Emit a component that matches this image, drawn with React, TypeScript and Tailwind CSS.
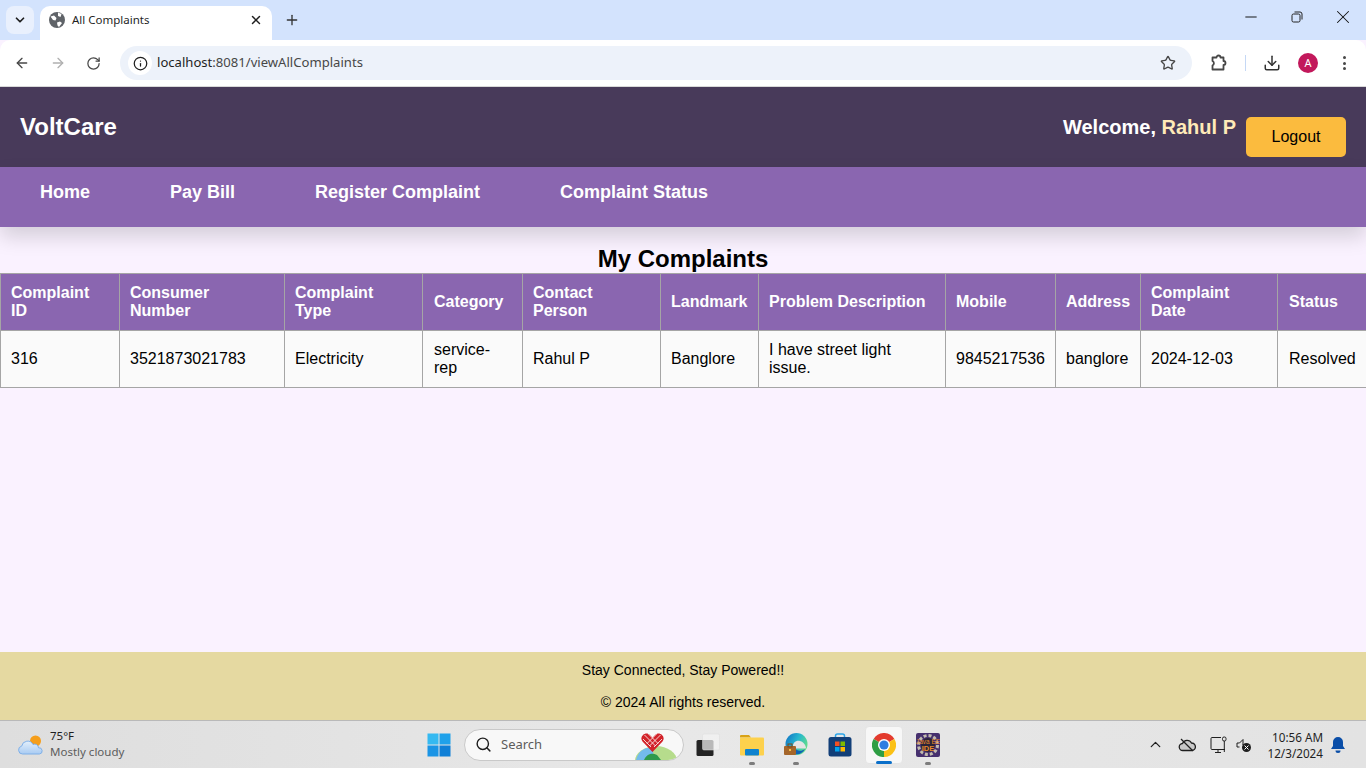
import { ArrowLeft, ArrowRight, ChevronDown, ChevronUp, Download, Info, Minus, Plus, RotateCw, Search, Star, X } from 'lucide-react';

const columns = [
  { title: ['Complaint', 'ID'], value: ['316'], width: 'w-[119px]', pad: 'px-[10px]' },
  { title: ['Consumer', 'Number'], value: ['3521873021783'], width: 'w-[165px]', pad: 'px-[10px]' },
  { title: ['Complaint', 'Type'], value: ['Electricity'], width: 'w-[138px]', pad: 'px-[10px]' },
  { title: ['Category'], value: ['service-', 'rep'], width: 'w-[100px]', pad: 'pl-[11px] pr-[9px]' },
  { title: ['Contact', 'Person'], value: ['Rahul P'], width: 'w-[138px]', pad: 'px-[10px]' },
  { title: ['Landmark'], value: ['Banglore'], width: 'w-[98px]', pad: 'px-[10px]' },
  { title: ['Problem Description'], value: ['I have street light', 'issue.'], width: 'w-[187px]', pad: 'px-[10px]' },
  { title: ['Mobile'], value: ['9845217536'], width: 'w-[110px]', pad: 'px-[10px]' },
  { title: ['Address'], value: ['banglore'], width: 'w-[85px]', pad: 'px-[10px]' },
  { title: ['Complaint', 'Date'], value: ['2024-12-03'], width: 'w-[137px]', pad: 'px-[10px]' },
  { title: ['Status'], value: ['Resolved'], width: 'w-[89px]', pad: 'pl-[11px] pr-[9px]' },
];

function GlobeIcon() {
  return (
    <svg width="16" height="16" viewBox="0 0 16 16">
      <circle cx="8" cy="8" r="8" fill="#5f6368" />
      <path d="M1.500 4.500 5 3.500 7.500 6 6.500 8.500 4 8ZM8 10.500l3-1 2 1.500-3 4-1.500-1.500ZM9 .5l3.500 1.500-1 3-2.500-1Z" fill="#fff" />
    </svg>
  );
}

function RestoreIcon() {
  return (
    <svg width="12" height="12" viewBox="0 0 12 12" fill="none" stroke="#222" strokeWidth="1">
      <rect x="1" y="3" width="8" height="8" rx="1.5" />
      <path d="M3.500 1h5.500a2 2 0 0 1 2 2v5.500" />
    </svg>
  );
}

function ExtensionIcon() {
  return (
    <svg width="18" height="18" viewBox="0 0 18 18" fill="none" stroke="#474747" strokeWidth="1.800" strokeLinejoin="round">
      <path d="M2.500 3.500H6.500a2 2 0 0 1 4 0H13.500V7a2 2 0 0 1 0 4V15.500H2.500V11.500a2.500 2.500 0 0 0 0-4.500Z" />
    </svg>
  );
}

function WeatherIcon() {
  return (
    <svg width="28" height="24" viewBox="0 0 28 24">
      <defs>
        <linearGradient id="cloudFill" x1="0" y1="0" x2="0" y2="1">
          <stop offset="0" stopColor="#e3effb" />
          <stop offset="1" stopColor="#a9cbf2" />
        </linearGradient>
      </defs>
      <circle cx="18.500" cy="8" r="5.500" fill="#f59e1b" />
      <path d="M5.500 21a4 4 0 0 1-.8-7.900A6 6 0 0 1 16 11.500a3.800 3.800 0 0 1 5.500 3.300A3.100 3.100 0 0 1 22.500 21Z" fill="url(#cloudFill)" stroke="#7fb0e8" strokeWidth="1" />
    </svg>
  );
}

function WindowsIcon() {
  return (
    <svg width="24" height="24" viewBox="0 0 24 24">
      <rect x="0.500" y="0.500" width="11" height="11" fill="#35b9f1" />
      <rect x="12.500" y="0.500" width="11" height="11" fill="#1fa1ea" />
      <rect x="0.500" y="12.500" width="11" height="11" fill="#1a94e5" />
      <rect x="12.500" y="12.500" width="11" height="11" fill="#0f7fd6" />
    </svg>
  );
}

function TaskViewIcon() {
  return (
    <svg width="24" height="24" viewBox="0 0 24 24">
      <rect x="0.500" y="7" width="17" height="16" rx="1.500" fill="#242424" />
      <rect x="6.500" y="1" width="17" height="16" rx="1.500" fill="#f2f2f2" fillOpacity="0.720" stroke="#dcdcdc" strokeWidth="0.500" />
    </svg>
  );
}

function FolderIcon() {
  return (
    <svg width="24" height="24" viewBox="0 0 24 24">
      <path d="M0 3a1 1 0 0 1 1-1h8l2 2.500H0Z" fill="#d8a216" />
      <rect x="0" y="4.500" width="24" height="18" rx="1" fill="#fdd14d" />
      <rect x="5" y="16" width="14" height="6.500" rx="1" fill="#0f83cf" />
    </svg>
  );
}

function EdgeIcon() {
  return (
    <svg width="24" height="24" viewBox="0 0 24 24">
      <defs>
        <linearGradient id="edgeFill" x1="0" y1="0" x2="1" y2="0.500">
          <stop offset="0" stopColor="#0f6cc4" />
          <stop offset="0.550" stopColor="#26b7cf" />
          <stop offset="1" stopColor="#5fdc8c" />
        </linearGradient>
      </defs>
      <circle cx="12.500" cy="11" r="11" fill="url(#edgeFill)" />
      <path d="M9 14c-.5-4 3-7 7-6 3 .8 5 3 6 6.500l-.5 1H12c-2 0-3-.5-3-1.500Z" fill="#e4e4e4" />
      <path d="M10 14c2 4 7 5 11 2-2 4-6 6-10 5Z" fill="#0f62b5" />
      <rect x="0" y="13" width="12" height="9" rx="1" fill="#a5662a" />
      <rect x="4" y="11" width="4" height="3" fill="none" stroke="#7a4a1c" strokeWidth="1" />
      <rect x="5" y="16" width="2" height="2" fill="#f5c349" />
    </svg>
  );
}

function StoreIcon() {
  return (
    <svg width="24" height="24" viewBox="0 0 24 24">
      <path d="M7.500 5V3a2 2 0 0 1 2-2h5a2 2 0 0 1 2 2v2" fill="none" stroke="#2ba5e8" strokeWidth="1.500" />
      <rect x="0.500" y="4" width="23" height="19.500" rx="2.500" fill="#123f78" />
      <rect x="7" y="8.500" width="4.500" height="4.500" fill="#f25022" />
      <rect x="12.500" y="8.500" width="4.500" height="4.500" fill="#7fba00" />
      <rect x="7" y="14" width="4.500" height="4.500" fill="#00a4ef" />
      <rect x="12.500" y="14" width="4.500" height="4.500" fill="#ffb900" />
    </svg>
  );
}

function ChromeIcon() {
  return (
    <svg width="24" height="24" viewBox="0 0 24 24">
      <path d="M12 12 1.600 6A12 12 0 0 1 22.400 6Z" fill="#e33b2e" />
      <path d="M12 12 13 24A12 12 0 0 1 1.600 6Z" fill="#2f9e44" />
      <path d="M12 12 22.400 6A12 12 0 0 1 12 24Z" fill="#fbc116" />
      <circle cx="12" cy="12" r="6" fill="#fff" />
      <circle cx="12" cy="12" r="4.600" fill="#2f7de1" />
    </svg>
  );
}

function JavaIdeIcon() {
  return (
    <svg width="24" height="24" viewBox="0 0 24 24">
      <rect width="24" height="24" rx="2" fill="#46306e" />
      <circle cx="12" cy="12" r="9.500" fill="none" stroke="#c2bcae" strokeWidth="3" strokeDasharray="3 2" />
      <circle cx="12" cy="12" r="7" fill="#2b2438" />
      <text x="12" y="10.500" textAnchor="middle" fontSize="6.500" fill="#e8892b" fontFamily="Liberation Sans, sans-serif">Java EE</text>
      <text x="12" y="18" textAnchor="middle" fontSize="7.500" fontWeight="700" fill="#e8892b" fontFamily="Liberation Sans, sans-serif">IDE</text>
    </svg>
  );
}

function BingHeartIcon() {
  return (
    <svg width="46" height="28" viewBox="0 0 46 28">
      <ellipse cx="23" cy="29" rx="21" ry="15" fill="#b6dc8c" />
      <path d="M3 28C5 20 11 15 19 16l3 12Z" fill="#73bbec" />
      <path d="M11 28c2-5 7-8 13-5l4 5Z" fill="#2e9a4c" />
      <path d="M19.500 20 9.500 9.500a5 5 0 0 1 .5-6.500c2-2 5-2 7 0l2.500 2.500L22 3c2-2 5-2 7 0a5 5 0 0 1 .5 6.500Z" fill="#d2232a" />
      <path d="M11.500 3l11 11M15.500 2l9.500 9.500M27.500 3l-11 11M23.500 2 14 11.500M10 7l8 8M29 7l-8 8" stroke="#fff" strokeWidth="0.800" />
    </svg>
  );
}

function CloudOffIcon() {
  return (
    <svg width="18" height="18" viewBox="0 0 18 18" fill="none" stroke="#1f1f1f" strokeWidth="1.300">
      <path d="M5 14.500a3.500 3.500 0 0 1-.5-7A5 5 0 0 1 13.500 7a3.700 3.700 0 0 1 .3 7.500Z" fill="#c9c9c9" />
      <path d="M3 3l12 12" />
    </svg>
  );
}

function MonitorPlugIcon() {
  return (
    <svg width="18" height="18" viewBox="0 0 18 18" fill="none" stroke="#1f1f1f" strokeWidth="1">
      <path d="M11 1.500H2a1 1 0 0 0-1 1v10a1 1 0 0 0 1 1h13" />
      <path d="M5 16.500h6M8 14v2.500" />
      <rect x="12.500" y="1" width="3.500" height="4" rx="1.500" />
      <path d="M14.300 5v11" />
    </svg>
  );
}

function MutedSpeakerIcon() {
  return (
    <svg width="16" height="16" viewBox="0 0 16 16">
      <path d="M1 6h2.500L7 2.500V8" fill="none" stroke="#1f1f1f" strokeWidth="1" />
      <path d="M1 6v4h2.500" fill="none" stroke="#1f1f1f" strokeWidth="1" />
      <circle cx="10.500" cy="10.500" r="4.500" fill="#1f1f1f" />
      <path d="M8.500 8.500l4 4M12.500 8.500l-4 4" stroke="#fff" strokeWidth="1" />
    </svg>
  );
}

function BellIcon() {
  return (
    <svg width="16" height="18" viewBox="0 0 16 18">
      <path d="M8 1a5 5 0 0 1 5 5v4l2 3H1l2-3V6a5 5 0 0 1 5-5Z" fill="#0a4ea8" />
      <path d="M5.500 14.500h5a2.500 2.500 0 0 1-5 0Z" fill="#0a4ea8" />
    </svg>
  );
}

function TaskbarApp({ children, dot, active }: { children: React.ReactNode; dot?: boolean; active?: boolean }) {
  return (
    <div className={`relative w-[38px] h-[38px] flex items-center justify-center rounded ${active ? 'bg-[#f7f7f7] border border-[#e4e4e4]' : ''}`}>
      {children}
      {dot && <span className="absolute bottom-[-1px] left-1/2 -translate-x-1/2 w-[6px] h-[3px] rounded-full bg-[#7c7c7c]" />}
      {active && <span className="absolute bottom-[-1px] left-1/2 -translate-x-1/2 w-[16px] h-[3px] rounded-full bg-[#0a6fc9]" />}
    </div>
  );
}

export default function App() {
  return (
    <div className="h-screen w-full overflow-hidden flex flex-col bg-[#faf2ff] font-['Liberation_Sans',Arial,sans-serif] text-black">
      {/* Browser chrome */}
      <div className="h-[40px] bg-[#d3e3fd] flex items-end pl-[6px] font-['Noto_Sans',sans-serif] shrink-0">
        <div className="w-[28px] h-[28px] mb-[6px] rounded-lg bg-[#e9f0fd] flex items-center justify-center">
          <ChevronDown size={14} strokeWidth={3} color="#1f1f1f" />
        </div>
        <div className="ml-[6px] w-[232px] h-[34px] bg-white rounded-t-[10px] flex items-center pl-[9px] pr-[9px] pb-[6px]">
          <GlobeIcon />
          <span className="ml-[7px] text-[11.5px] text-[#1f1f1f] flex-1">All Complaints</span>
          <X size={14} strokeWidth={2.500} color="#1f1f1f" />
        </div>
        <div className="ml-[12px] mb-[12px]">
          <Plus size={16} strokeWidth={2} color="#333" />
        </div>
        <div className="ml-auto mb-[12px] flex items-center">
          <div className="w-[46px] flex justify-center"><Minus size={18} strokeWidth={1.300} color="#111" /></div>
          <div className="w-[46px] flex justify-center"><RestoreIcon /></div>
          <div className="w-[46px] flex justify-center"><X size={22} strokeWidth={1.100} color="#111" /></div>
        </div>
      </div>
      <div className="h-[47px] bg-white rounded-t-[10px] flex items-center border-b border-[#d9d9d9] shrink-0">
        <div className="flex items-center w-[120px] pl-[14px] gap-[20px]">
          <ArrowLeft size={16} strokeWidth={2} color="#474747" />
          <ArrowRight size={16} strokeWidth={2} color="#b0b0b0" />
          <RotateCw size={15} strokeWidth={2} color="#474747" />
        </div>
        <div className="w-[1072px] h-[34px] rounded-full bg-[#edf2fa] flex items-center pl-[8px] pr-[16px] font-['Noto_Sans',sans-serif]">
          <div className="w-[24px] h-[24px] rounded-full bg-white flex items-center justify-center">
            <Info size={15} strokeWidth={2} color="#1f1f1f" />
          </div>
          <span className="ml-[5px] text-[13.1px] text-[#1f1f1f]">localhost<span className="text-[#474747]">:8081/viewAllComplaints</span></span>
          <Star size={16} strokeWidth={2} color="#474747" className="ml-auto" />
        </div>
        <div className="flex-1 flex items-center pl-[18px] relative">
          <ExtensionIcon />
          <span className="ml-[17px] w-px h-[16px] bg-[#c5d8f5]" />
          <Download size={18} strokeWidth={2} color="#333" className="ml-[17px]" />
          <span className="ml-[17px] w-[20px] h-[20px] rounded-full bg-[#c2185b] text-white text-[11px] flex items-center justify-center font-['Noto_Sans',sans-serif]">A</span>
          <span className="ml-[25px] flex flex-col gap-[2.500px]">
            <span className="w-[3px] h-[3px] rounded-full bg-[#474747]" />
            <span className="w-[3px] h-[3px] rounded-full bg-[#474747]" />
            <span className="w-[3px] h-[3px] rounded-full bg-[#474747]" />
          </span>
        </div>
      </div>

      {/* Page */}
      <header className="h-[80px] bg-[#483a5a] flex items-center justify-between pl-[20px] pr-[20px] shrink-0">
        <h1 className="text-[24px] font-bold text-white">VoltCare</h1>
        <div className="flex items-center gap-[10px]">
          <span className="text-[20px] font-bold text-white">
            Welcome, <span className="text-[#ffeab8]">Rahul P</span>
          </span>
          <button className="w-[100px] h-[40px] mt-[20px] bg-[#fbbb3e] rounded-[5px] text-[16px] text-black">Logout</button>
        </div>
      </header>
      <nav className="h-[60px] bg-[#8a66b0] flex items-start pt-[12px] pl-[40px] gap-[80px] text-[18px] font-bold text-white shadow-[0_10px_20px_rgba(0,0,0,0.15)] shrink-0 relative">
        <a>Home</a>
        <a>Pay Bill</a>
        <a>Register Complaint</a>
        <a>Complaint Status</a>
      </nav>

      <main className="flex-1">
        <h2 className="mt-[18px] text-center text-[24px] leading-[28px] font-bold">My Complaints</h2>
        <table className="table-fixed w-[1366px] border-collapse">
          <thead>
            <tr className="h-[57px] bg-[#8a66b0] text-white">
              {columns.map((col) => (
                <th key={col.title.join(' ')} className={`${col.width} ${col.pad} border border-[#a5a5a5] text-left text-[16px] leading-[18px] font-bold`}>
                  {col.title.map((line) => <div key={line}>{line}</div>)}
                </th>
              ))}
            </tr>
          </thead>
          <tbody>
            <tr className="h-[57px] bg-[#fafafa]">
              {columns.map((col) => (
                <td key={col.title.join(' ')} className={`${col.pad} border border-[#a5a5a5] text-[16px] leading-[18px]`}>
                  {col.value.map((line) => <div key={line}>{line}</div>)}
                </td>
              ))}
            </tr>
          </tbody>
        </table>
      </main>

      <footer className="h-[68px] bg-[#e5d9a1] text-center text-[14px] leading-[16px] text-black shrink-0 pt-[10px]">
        <p>Stay Connected, Stay Powered!!</p>
        <p className="mt-[16px]">© 2024 All rights reserved.</p>
      </footer>

      {/* Windows taskbar */}
      <div className="h-[48px] bg-linear-to-r from-[#dedede] via-[#e8e8e8] to-[#e3e3e3] border-t border-[#b9b9b9] flex items-center relative font-['Noto_Sans',sans-serif] shrink-0">
        <div className="flex items-center pl-[17px] gap-[5px] w-[419px]">
          <WeatherIcon />
          <div className="text-[11.5px] leading-[16px] -mt-[1px]">
            <div className="text-[#1f1f1f]">75°F</div>
            <div className="text-[#5c5c5c]">Mostly cloudy</div>
          </div>
        </div>
        <div className="w-[45px] pl-[8px] flex items-center"><WindowsIcon /></div>
        <div className="relative w-[220px] h-[32px] rounded-full bg-[#f8f8f8] border border-[#c9c9c9] flex items-center pl-[10px] overflow-hidden">
          <Search size={17} strokeWidth={2} color="#1f1f1f" />
          <span className="ml-[9px] text-[13px] text-[#5c5c5c]">Search</span>
          <span className="absolute right-[4px] bottom-0 flex"><BingHeartIcon /></span>
        </div>
        <div className="flex items-center ml-[5px] gap-[6px]">
          <TaskbarApp><TaskViewIcon /></TaskbarApp>
          <TaskbarApp dot><FolderIcon /></TaskbarApp>
          <TaskbarApp dot><EdgeIcon /></TaskbarApp>
          <TaskbarApp><StoreIcon /></TaskbarApp>
          <TaskbarApp active><ChromeIcon /></TaskbarApp>
          <TaskbarApp dot><JavaIdeIcon /></TaskbarApp>
        </div>
        <div className="ml-auto flex items-center pr-[20px]">
          <ChevronUp size={17} strokeWidth={1.800} color="#1f1f1f" />
          <span className="ml-[14px]"><CloudOffIcon /></span>
          <span className="ml-[14px]"><MonitorPlugIcon /></span>
          <span className="ml-[8px]"><MutedSpeakerIcon /></span>
          <div className="ml-[16px] text-right text-[11.7px] leading-[16px] text-[#1f1f1f]">
            <div>10:56 AM</div>
            <div>12/3/2024</div>
          </div>
          <span className="ml-[7px]"><BellIcon /></span>
        </div>
      </div>
    </div>
  );
}
